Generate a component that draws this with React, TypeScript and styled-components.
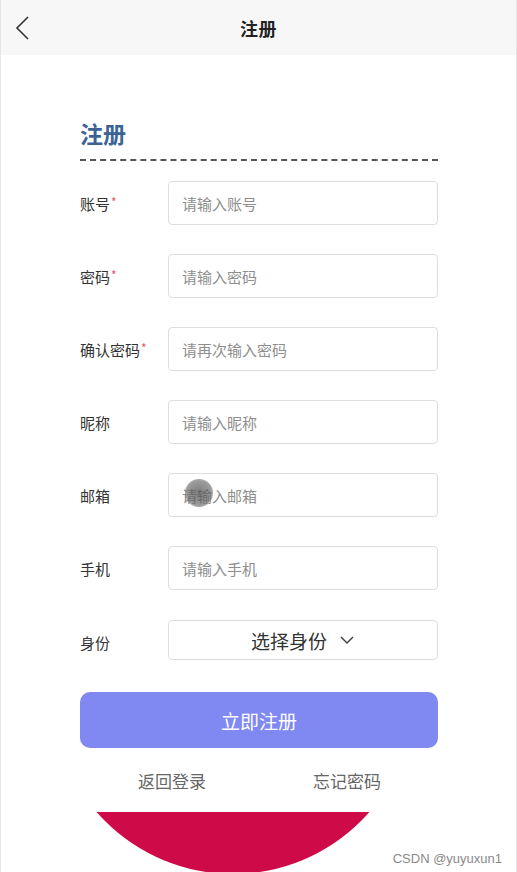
import React from "react";
import styled, { createGlobalStyle } from "styled-components";

const GlobalStyle = createGlobalStyle`
  html, body {
    margin: 0;
    padding: 0;
    background: #ffffff;
  }
  * {
    box-sizing: border-box;
  }
  body {
    font-family: "Noto Sans CJK SC", "Noto Sans", sans-serif;
  }
`;

const Page = styled.div`
  position: relative;
  width: 517px;
  height: 872px;
  overflow: hidden;
  background: #ffffff;
  border-left: 1px solid #e6e6e6;
  border-right: 1px solid #e6e6e6;
`;

const NavBar = styled.div`
  height: 55px;
  background: #f7f7f7;
  display: grid;
  grid-template-columns: 60px 1fr 60px;
  align-items: center;
`;

const BackButton = styled.div`
  padding-left: 13px;
  display: flex;
  align-items: center;
`;

const NavTitle = styled.h1`
  margin: 0;
  text-align: center;
  font-size: 18px;
  font-weight: 600;
  color: #222;
  letter-spacing: 0.5px;
`;

const Form = styled.div`
  width: 358px;
  margin-left: 79px;
  padding-top: 65px;
  display: flex;
  flex-direction: column;
`;

const FormTitle = styled.h2`
  margin: 0;
  font-size: 23px;
  line-height: 26px;
  font-weight: 700;
  color: #3b6494;
  padding-bottom: 13px;
  border-bottom: 2px dashed #555;
`;

const Fields = styled.div`
  margin-top: 20px;
  display: flex;
  flex-direction: column;
  gap: 29px;
`;

const Row = styled.div<{ $height?: number }>`
  display: flex;
  align-items: center;
  height: ${(p) => p.$height ?? 44}px;
`;

const Label = styled.label<{ $shift?: number }>`
  width: 88px;
  flex-shrink: 0;
  font-size: 15px;
  color: #333;
  padding-top: ${(p) => p.$shift ?? 0}px;
`;

const Star = styled.span`
  color: #e0566a;
  font-size: 12px;
  vertical-align: 3px;
  margin-left: 1px;
`;

const Input = styled.input`
  flex: 1;
  height: 100%;
  border: 1px solid #dedede;
  border-radius: 4px;
  padding: 0 13px;
  font-family: inherit;
  font-size: 15px;
  color: #333;
  outline: none;
  &::placeholder {
    color: #8e8e8e;
  }
`;

const Select = styled.div`
  flex: 1;
  height: 100%;
  border: 1px solid #dedede;
  border-radius: 4px;
  display: flex;
  align-items: center;
  justify-content: center;
  gap: 12px;
  font-size: 19px;
  color: #333;
`;

const SubmitButton = styled.button`
  margin-top: 32px;
  height: 56px;
  border: none;
  border-radius: 10px;
  background: #7f89f1;
  color: #ffffff;
  font-family: inherit;
  font-size: 19px;
`;

const Links = styled.div`
  margin-top: 20px;
  display: flex;
  justify-content: space-between;
  padding: 0 57px 0 58px;
`;

const LinkText = styled.span`
  font-size: 17px;
  color: #666;
  line-height: 26px;
`;

const Decoration = styled.div`
  margin-top: 18px;
  height: 62px;
  overflow: hidden;
`;

const Disc = styled.div`
  width: 362px;
  height: 362px;
  border-radius: 50%;
  background: #cf0a48;
  margin-left: 51px;
  margin-top: -300px;
`;

const TouchCursor = styled.div`
  position: absolute;
  left: 184px;
  top: 479px;
  width: 28px;
  height: 28px;
  border-radius: 50%;
  background: radial-gradient(
    circle,
    rgba(80, 80, 80, 0.75) 0%,
    rgba(100, 100, 100, 0.65) 60%,
    rgba(140, 140, 140, 0.3) 100%
  );
`;

const Watermark = styled.div`
  position: absolute;
  right: 14px;
  bottom: 6px;
  font-family: "Liberation Sans", Arial, sans-serif;
  font-size: 13px;
  color: #8a8a8a;
`;

const fields = [
  { label: "账号", placeholder: "请输入账号", required: true },
  { label: "密码", placeholder: "请输入密码", required: true },
  { label: "确认密码", placeholder: "请再次输入密码", required: true },
  { label: "昵称", placeholder: "请输入昵称" },
  { label: "邮箱", placeholder: "请输入邮箱" },
  { label: "手机", placeholder: "请输入手机" },
];

export default function App() {
  return (
    <Page>
      <GlobalStyle />
      <NavBar>
        <BackButton>
          <svg width="18" height="24" viewBox="0 0 18 24" fill="none">
            <path d="M14 1 L3 12 L14 23" stroke="#333" strokeWidth="1.6" />
          </svg>
        </BackButton>
        <NavTitle>注册</NavTitle>
        <div />
      </NavBar>
      <Form>
        <FormTitle>注册</FormTitle>
        <Fields>
          {fields.map((f) => (
            <Row key={f.label}>
              <Label>
                {f.label}
                {f.required && <Star>*</Star>}
              </Label>
              <Input placeholder={f.placeholder} />
            </Row>
          ))}
          <Row $height={40} style={{ marginTop: 1 }}>
            <Label $shift={4}>身份</Label>
            <Select>
              <span>选择身份</span>
              <svg width="16" height="16" viewBox="0 0 16 16" fill="none">
                <path d="M2 5 L8 11 L14 5" stroke="#444" strokeWidth="1.5" />
              </svg>
            </Select>
          </Row>
        </Fields>
        <SubmitButton>立即注册</SubmitButton>
        <Links>
          <LinkText>返回登录</LinkText>
          <LinkText>忘记密码</LinkText>
        </Links>
      </Form>
      <Decoration>
        <Disc />
      </Decoration>
      <TouchCursor />
      <Watermark>CSDN @yuyuxun1</Watermark>
    </Page>
  );
}
